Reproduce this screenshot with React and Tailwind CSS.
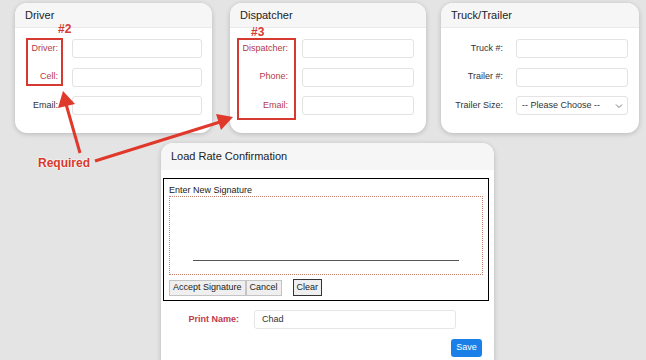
import React from "react";

const font = { fontFamily: '"Liberation Sans", Arial, sans-serif' };

function Card({ title, className, children }) {
  return (
    <div className={`relative bg-white rounded-[12px] shadow-[0_1px_5px_rgba(0,0,0,0.2)] overflow-visible ${className}`}>
      <div className="h-[25px] bg-[#f6f6f6] border-b border-[#ebebeb] rounded-t-[12px] pl-[10px] flex items-center text-[11px] text-[#222]">
        {title}
      </div>
      {children}
    </div>
  );
}

function Row({ label, red, labelCls, inputCls, children }) {
  return (
    <div className="flex items-center h-[19px] mb-[9.5px]">
      <div className={`text-right text-[9px] ${red ? "text-[#b23a4c]" : "text-[#333]"} ${labelCls}`}>{label}</div>
      {children || <div className={`h-[19px] border border-[#e3e3e3] rounded-[3px] bg-white ${inputCls}`} />}
    </div>
  );
}

export default function App() {
  return (
    <div style={font} className="relative w-[646px] h-[360px] bg-[#e4e4e4] overflow-hidden pt-[3px]">
      {/* top cards */}
      <div className="flex items-start pl-[15px]">
        <Card title="Driver" className="w-[197px] h-[130px]">
          <div className="pt-[11px]">
            <Row label="Driver:" red labelCls="w-[43px]" inputCls="ml-[14px] w-[130px]" />
            <Row label="Cell:" red labelCls="w-[43px]" inputCls="ml-[14px] w-[130px]" />
            <Row label="Email:" labelCls="w-[43px]" inputCls="ml-[14px] w-[130px]" />
          </div>
          <div className="absolute left-[11px] top-[35px] w-[37px] h-[48px] border-2 border-[#d6392f]" />
          <div className="absolute left-[43px] top-[17px] text-[12px] font-bold text-[#d6392f] [text-shadow:0_0_2px_#fff]">#2</div>
        </Card>

        <Card title="Dispatcher" className="ml-[18px] w-[196px] h-[130px]">
          <div className="pt-[11px]">
            <Row label="Dispatcher:" red labelCls="w-[58px]" inputCls="ml-[14px] w-[112px]" />
            <Row label="Phone:" red labelCls="w-[58px]" inputCls="ml-[14px] w-[112px]" />
            <Row label="Email:" red labelCls="w-[58px]" inputCls="ml-[14px] w-[112px]" />
          </div>
          <div className="absolute left-[7px] top-[35px] w-[59px] h-[82px] border-2 border-[#d6392f]" />
          <div className="absolute left-[21px] top-[20px] text-[12px] font-bold text-[#d6392f] [text-shadow:0_0_2px_#fff]">#3</div>
        </Card>

        <Card title="Truck/Trailer" className="ml-[15px] w-[198px] h-[130px]">
          <div className="pt-[11px]">
            <Row label="Truck #:" labelCls="w-[62px]" inputCls="ml-[13px] w-[112px]" />
            <Row label="Trailer #:" labelCls="w-[62px]" inputCls="ml-[13px] w-[112px]" />
            <Row label="Trailer Size:" labelCls="w-[62px]">
              <div className="ml-[13px] w-[112px] h-[19px] border border-[#e3e3e3] rounded-[3px] bg-white flex items-center justify-between pl-[5px] pr-[4px] text-[9px] text-[#333]">
                <span>-- Please Choose --</span>
                <svg width="8" height="6" viewBox="0 0 8 6" fill="none" stroke="#777" strokeWidth="1">
                  <path d="M1 1.5l3 3 3-3" />
                </svg>
              </div>
            </Row>
          </div>
        </Card>
      </div>

      {/* load rate confirmation */}
      <div className="ml-[161px] mt-[10px] w-[333px] h-[240px] bg-white rounded-t-[12px] shadow-[0_1px_5px_rgba(0,0,0,0.2)]">
        <div className="h-[27px] bg-[#f6f6f6] rounded-t-[12px] pl-[10px] flex items-center text-[11px] text-[#222]">
          Load Rate Confirmation
        </div>
        <div className="pt-[8px] pl-[2px] pr-[5px]">
          <div className="border-[1.5px] border-black h-[123px] px-[5px]">
            <div className="text-[9px] text-[#222] pt-[5px] leading-[12px]">Enter New Signature</div>
            <div className="relative h-[79px] border border-dotted border-[#c4806f]">
              <div className="absolute left-[23px] right-[23px] top-[63px] h-px bg-[#555]" />
            </div>
            <div className="flex items-center mt-[4px]">
              <button className="h-[16px] px-[3px] bg-[#efefef] border border-[#c4c4c4] text-[9px] text-[#222]">Accept Signature</button>
              <button className="h-[16px] px-[3px] bg-[#efefef] border border-[#c4c4c4] text-[9px] text-[#222]">Cancel</button>
              <button className="ml-[11px] h-[17px] px-[3px] bg-[#efefef] border border-[#333] text-[9px] text-[#222]">Clear</button>
            </div>
          </div>
          <div className="flex items-center mt-[9px]">
            <div className="w-[76px] text-right text-[9px] font-bold text-[#c03a4f]">Print Name:</div>
            <div className="ml-[15px] w-[202px] h-[19px] border border-[#e6e6e6] rounded-[3px] flex items-center pl-[7px] text-[9px] text-[#333]">Chad</div>
          </div>
          <div className="flex justify-end pr-[7px] mt-[10px]">
            <button className="w-[31px] h-[18px] bg-[#1a7fe6] rounded-[3px] text-white text-[9px]">Save</button>
          </div>
        </div>
      </div>

      {/* annotations */}
      <svg className="absolute left-0 top-0" width="646" height="360">
        <g stroke="#e0392c" strokeWidth="3" fill="#e0392c">
          <line x1="80" y1="153" x2="66" y2="104" />
          <polygon points="63,91 58,108 75,104" stroke="none" />
          <line x1="95" y1="161" x2="220" y2="122" />
          <polygon points="233,117 216,114 221,130" stroke="none" />
        </g>
      </svg>
      <div className="absolute left-[38px] top-[154px] text-[12px] font-bold text-[#d8382c] [text-shadow:0_0_2px_#fff,0_0_2px_#fff]">Required</div>
    </div>
  );
}
